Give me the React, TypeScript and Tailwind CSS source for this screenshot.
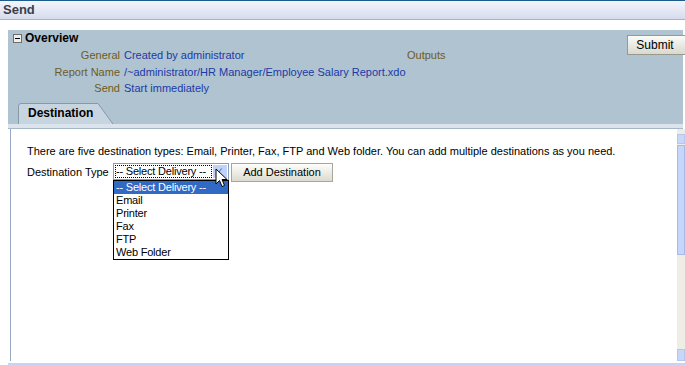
const options = ['-- Select Delivery --', 'Email', 'Printer', 'Fax', 'FTP', 'Web Folder']

function Cursor() {
  return (
    <svg width="14" height="20" viewBox="0 0 14 20" className="absolute left-[102px] top-[5px]">
      <path d="M1 1 L1 16 L4.5 12.5 L7 18.5 L9.5 17.5 L7 11.5 L12 11.5 Z" fill="#fff" stroke="#000" strokeWidth="1" strokeLinejoin="round" />
    </svg>
  )
}

function Tab() {
  return (
    <div className="relative ml-[10px] h-[21px] w-[96px]">
      <svg width="96" height="21" viewBox="0 0 96 21" className="absolute inset-0">
        <path d="M0.5 21 L0.5 3 Q0.5 0.5 3 0.5 L80 0.5 L95 21" fill="#c7d5e0" stroke="#8798a8" />
      </svg>
      <span className="relative pl-[10px] leading-[21px] text-[12px] font-bold text-black">Destination</span>
    </div>
  )
}

export default function App() {
  return (
    <div className="h-[365px] w-[685px] overflow-hidden bg-white text-[11px] leading-[14px] [font-family:'Liberation_Sans',Arial,sans-serif]">
      {/* title bar */}
      <div className="flex h-[20px] items-center border-t border-t-[#1d5a8e] border-b border-b-[#a9b2c4] bg-gradient-to-b from-[#f4f5fb] to-[#d6dcee] pl-[3px]">
        <span className="text-[13px] font-bold text-[#3b4046]">Send</span>
      </div>
      <div className="h-[10px]" />
      <div className="ml-[8px] mr-[2px] bg-[#b0c3d1]">
        <div className="flex">
          <div className="flex-1 pt-px">
            <div className="flex h-[14px] items-center gap-[3px] pl-[5px]">
              <span className="flex size-[9px] items-center justify-center border border-[#6e6e6e] bg-[#f0f0ea]">
                <span className="h-px w-[5px] bg-black" />
              </span>
              <span className="text-[12px] font-bold text-black">Overview</span>
            </div>
            <div className="mt-[2px] grid grid-cols-[112px_auto] gap-x-[4px] leading-[16.5px]">
              <span className="text-right text-[#6e5c1c]">General</span>
              <div className="flex text-[#1b3aa6]">
                <span className="w-[283px]">Created by administrator</span>
                <span className="text-[#6e5c1c]">Outputs</span>
              </div>
              <span className="text-right text-[#6e5c1c]">Report Name</span>
              <span className="text-[#1b3aa6]">/~administrator/HR Manager/Employee Salary Report.xdo</span>
              <span className="text-right text-[#6e5c1c]">Send</span>
              <span className="text-[#1b3aa6]">Start immediately</span>
            </div>
          </div>
          <div className="pt-[5px]">
            <button className="-mr-[6px] h-[20px] w-[62px] border border-[#9a9a8c] bg-gradient-to-b from-[#fbfbf8] to-[#d9d9cf] pr-[6px] text-[12px] text-black">Submit</button>
          </div>
        </div>
        <div className="mt-[6px]">
          <Tab />
        </div>
      </div>
      <div className="ml-[8px] mr-[2px] h-[5px] border-b border-[#a6b6c9] bg-[#dbe4ec]" />
      <div className="ml-[10px] flex h-[232px] border-l border-[#97a9c4]">
        <div className="flex-1 pl-[16px] pt-[15px] text-black">
          <p>There are five destination types: Email, Printer, Fax, FTP and Web folder. You can add multiple destinations as you need.</p>
          <div className="mt-[5px] flex items-start">
            <span className="mt-[2px] w-[86px]">Destination Type</span>
            <div className="relative w-[116px]">
              <div className="flex h-[17px] items-center border border-[#7f9db9] bg-white p-px">
                <span className="flex h-full min-w-0 flex-1 items-center whitespace-nowrap bg-white px-px text-[11px] leading-none tracking-[-0.2px] outline-1 outline-dotted outline-black -outline-offset-1">-- Select Delivery --</span>
                <span className="ml-px flex h-full w-[14px] items-center justify-center bg-[#c1d3fb] text-[9px] leading-none text-[#4d6185]">✓</span>
              </div>
              <ul className="border border-black bg-white text-[11px] leading-[13px] tracking-[-0.2px]">
                {options.map((o, i) => (
                  <li key={o} className={i === 0 ? 'bg-[#316ac5] px-[2px] text-white' : 'px-[2px] text-black'}>{o}</li>
                ))}
              </ul>
              <Cursor />
            </div>
            <button className="ml-[2px] h-[19px] w-[102px] border border-[#a7a69a] bg-gradient-to-b from-[#fdfdfb] to-[#dddbd0] text-[11px] text-black">Add Destination</button>
          </div>
        </div>
        <div className="flex w-[8px] flex-col bg-[#efeee6] pt-[5px]">
          <div className="h-[10px] border border-[#b5c7ee] bg-[#c8d7f8]" />
          <div className="mt-px h-[110px] border border-[#a6bbe8] bg-[#c6d6fb]" />
          <div className="flex-1" />
          <div className="h-[12px] border border-[#b5c7ee] bg-[#c8d7f8]" />
        </div>
      </div>
      <div className="ml-[8px] mt-[2px] h-[6px] bg-gradient-to-b from-[#c2d0f4] to-[#dbe3f6]" />
    </div>
  )
}
